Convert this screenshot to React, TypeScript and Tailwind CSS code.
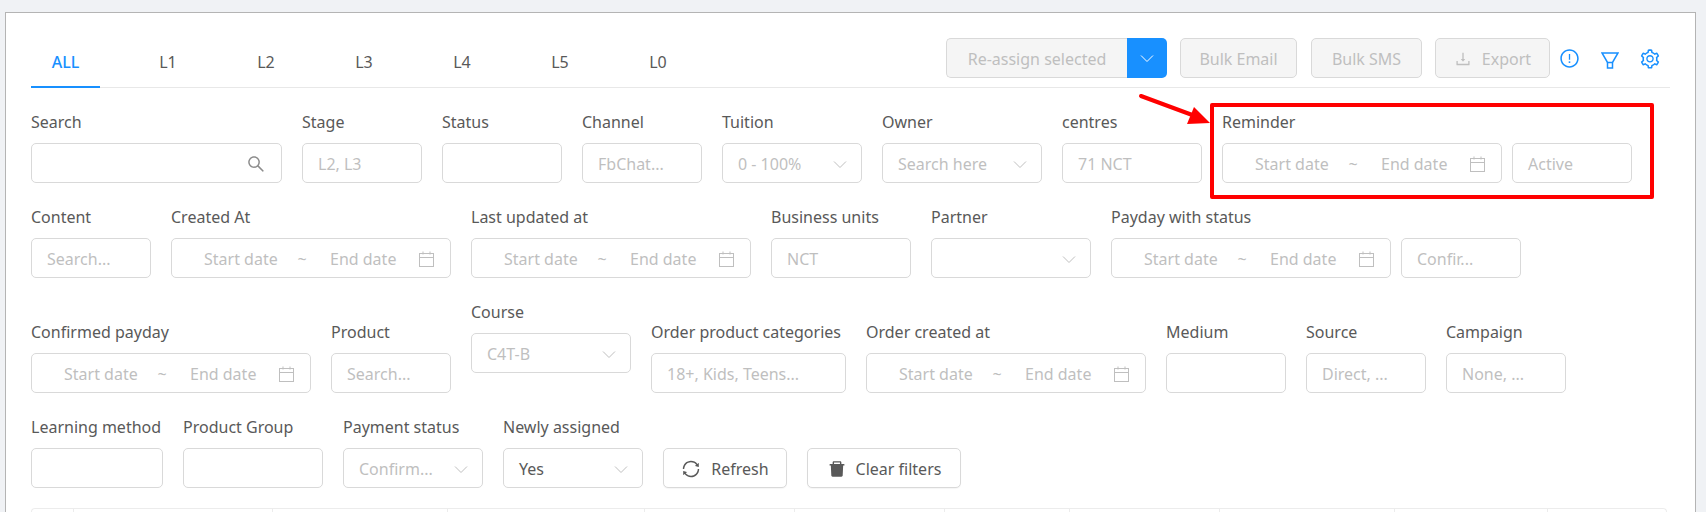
import React from 'react';
import {
  AiFillDelete,
  AiOutlineDownload,
  AiOutlineExclamationCircle,
  AiOutlineSearch,
  AiOutlineSetting,
  AiOutlineSync,
} from 'react-icons/ai';

const tabs = ['L1', 'L2', 'L3', 'L4', 'L5', 'L0'];

const tableCols = [
  'w-[42px]',
  'w-[199px]',
  'w-[175px]',
  'w-[197px]',
  'w-[150px]',
  'w-[150px]',
  'w-[125px]',
  'w-[150px]',
  'w-[175px]',
  'w-[153px]',
  'w-[119px]',
];

const Chevron = ({ className = 'text-[#bfbfbf]' }: { className?: string }) => (
  <svg width="14" height="9" viewBox="0 0 14 9" fill="none" stroke="currentColor" strokeWidth="1" className={className}>
    <path d="M1 1.5 7 7.5 13 1.5" />
  </svg>
);

const CalendarIcon = () => (
  <svg width="15" height="16" viewBox="0 0 15 16" fill="none" stroke="#bfbfbf" strokeWidth="1">
    <rect x="0.5" y="2.5" width="14" height="13" />
    <path d="M0.5 6.5h14M4 0.5v3M11 0.5v3" />
  </svg>
);

const FunnelIcon = () => (
  <svg width="18" height="17" viewBox="0 0 18 17" fill="none" stroke="#1890ff" strokeWidth="1.5">
    <path d="M1 1h16L11.5 10.5h-5L1 1Z" />
    <path d="M6.5 10.5v5.5h5v-5.5" />
  </svg>
);

const Box = ({ className, children }: { className: string; children?: React.ReactNode }) => (
  <div className={`flex h-10 items-center rounded-[5px] border border-[#d9d9d9] bg-white px-[15px] pt-[2px] text-[#bfbfbf] ${className}`}>
    {children}
  </div>
);

const Field = ({ label, className = '', children }: { label: string; className?: string; children: React.ReactNode }) => (
  <div className={`flex-none ${className}`}>
    <div className="h-8 whitespace-nowrap leading-[23px] text-[#595959]">{label}</div>
    {children}
  </div>
);

const TextField = ({ label, width, text }: { label: string; width: string; text?: string }) => (
  <Field label={label}>
    <Box className={`whitespace-nowrap ${width}`}>{text}</Box>
  </Field>
);

const SelectField = ({ label, width, text, dark, className }: { label: string; width: string; text?: string; dark?: boolean; className?: string }) => (
  <Field label={label} className={className}>
    <Box className={`justify-between whitespace-nowrap pr-[14px] ${width}`}>
      <span className={dark ? 'text-[#595959]' : ''}>{text}</span>
      <Chevron />
    </Box>
  </Field>
);

const DateBox = () => (
  <Box className="w-[280px] pl-[32px] pr-[16px]">
    <span className="w-[77px] flex-none whitespace-nowrap">Start date</span>
    <span className="w-[49px] flex-none pr-[7px] text-center">~</span>
    <span className="flex-1 whitespace-nowrap">End date</span>
    <CalendarIcon />
  </Box>
);

const DateField = ({ label }: { label: string }) => (
  <Field label={label}>
    <DateBox />
  </Field>
);

const DateStatusField = ({ label, text }: { label: string; text: string }) => (
  <Field label={label}>
    <div className="flex gap-[10px]">
      <DateBox />
      <Box className="w-[120px]">{text}</Box>
    </div>
  </Field>
);

const DisabledButton = ({ className, children }: { className: string; children: React.ReactNode }) => (
  <div className={`flex h-10 items-center justify-center whitespace-nowrap rounded-[5px] border border-[#d9d9d9] bg-[#f5f5f5] pt-[2px] text-[#bfbfbf] ${className}`}>
    {children}
  </div>
);

const ActionButton = ({ className, children }: { className: string; children: React.ReactNode }) => (
  <div className={`flex h-10 flex-none items-center justify-center whitespace-nowrap rounded-[5px] border border-[#d9d9d9] bg-white pt-[2px] text-[#595959] shadow-[0_1px_1px_rgba(0,0,0,0.04)] ${className}`}>
    {children}
  </div>
);

export default function App() {
  return (
    <div className="relative h-[512px] overflow-hidden bg-[#f0f2f5] pl-[5px] pr-[10px] pt-[12px] font-['Noto_Sans',sans-serif] text-[16px]">
      <div className="h-[600px] border border-[#b4b4b4] border-b-0 bg-white px-[25px] pt-[25px]">
        {/* Tabs and bulk actions */}
        <div className="flex h-[50px] items-start justify-between border-b border-[#e8e8e8]">
          <div className="flex">
            <div className="mr-10 flex h-[50px] w-[69px] items-center justify-center border-b-2 border-[#1890ff] font-medium text-[#1890ff]">
              ALL
            </div>
            {tabs.map((tab) => (
              <div key={tab} className="mr-[42px] flex h-[50px] w-[56px] items-center justify-center pb-[2px] text-[#595959]">
                {tab}
              </div>
            ))}
          </div>
          <div className="flex items-start">
            <div className="flex">
              <DisabledButton className="w-[181px] rounded-r-none border-r-0">Re-assign selected</DisabledButton>
              <div className="flex h-10 w-10 items-center justify-center rounded-r-[5px] bg-[#1890ff]">
                <Chevron className="text-white" />
              </div>
            </div>
            <DisabledButton className="ml-[13px] w-[117px]">Bulk Email</DisabledButton>
            <DisabledButton className="ml-[14px] w-[111px]">Bulk SMS</DisabledButton>
            <DisabledButton className="ml-[13px] w-[115px] gap-[10px]">
              <AiOutlineDownload size={18} />
              Export
            </DisabledButton>
            <div className="mr-[9px] ml-[9px] mt-[10px] flex items-start text-[#1890ff]">
              <AiOutlineExclamationCircle size={21} />
              <div className="ml-[21px] mt-[4px]">
                <FunnelIcon />
              </div>
              <div className="ml-[20px]">
                <AiOutlineSetting size={22} />
              </div>
            </div>
          </div>
        </div>

        {/* Filters */}
        <div className="mt-[23px] flex flex-col gap-[23px]">
          <div className="flex gap-5">
            <Field label="Search">
              <Box className="w-[251px] justify-end">
                <AiOutlineSearch size={20} className="text-[#8c8c8c]" />
              </Box>
            </Field>
            <TextField label="Stage" width="w-[120px]" text="L2, L3" />
            <TextField label="Status" width="w-[120px]" />
            <TextField label="Channel" width="w-[120px]" text="FbChat..." />
            <SelectField label="Tuition" width="w-[140px]" text="0 - 100%" />
            <SelectField label="Owner" width="w-[160px]" text="Search here" />
            <TextField label="centres" width="w-[140px]" text="71 NCT" />
            <DateStatusField label="Reminder" text="Active" />
          </div>

          <div className="flex gap-5">
            <TextField label="Content" width="w-[120px]" text="Search..." />
            <DateField label="Created At" />
            <DateField label="Last updated at" />
            <TextField label="Business units" width="w-[140px]" text="NCT" />
            <SelectField label="Partner" width="w-[160px]" />
            <DateStatusField label="Payday with status" text="Confir..." />
          </div>

          <div className="flex items-end gap-5">
            <DateField label="Confirmed payday" />
            <TextField label="Product" width="w-[120px]" text="Search..." />
            <SelectField label="Course" width="w-[160px]" text="C4T-B" className="mb-5" />
            <TextField label="Order product categories" width="w-[195px]" text="18+, Kids, Teens..." />
            <DateField label="Order created at" />
            <TextField label="Medium" width="w-[120px]" />
            <TextField label="Source" width="w-[120px]" text="Direct, ..." />
            <TextField label="Campaign" width="w-[120px]" text="None, ..." />
          </div>

          <div className="flex items-end gap-5">
            <TextField label="Learning method" width="w-[132px]" />
            <TextField label="Product Group" width="w-[140px]" />
            <SelectField label="Payment status" width="w-[140px]" text="Confirm..." />
            <SelectField label="Newly assigned" width="w-[140px]" text="Yes" dark />
            <ActionButton className="w-[124px] gap-[10px]">
              <AiOutlineSync size={20} />
              Refresh
            </ActionButton>
            <ActionButton className="w-[154px] gap-[9px]">
              <AiFillDelete size={20} />
              Clear filters
            </ActionButton>
          </div>
        </div>

        {/* Top edge of the table below the filters */}
        <div className="mt-5 flex h-10 w-[1636px] rounded-t-[4px] border-x border-t border-[#ececec]">
          {tableCols.map((col, i) => (
            <div key={i} className={`${col} flex-none border-r border-[#ececec] last:border-r-0`} />
          ))}
        </div>
      </div>

      {/* Red annotation drawn on top of the screenshot */}
      <div className="absolute left-[1210px] top-[103px] h-[96px] w-[444px] rounded-[2px] border-4 border-[#ff0000]" />
      <svg className="absolute left-[1135px] top-[90px]" width="80" height="40" viewBox="0 0 80 40" fill="none">
        <path d="M6 6 60 26" stroke="#ff0000" strokeWidth="4" strokeLinecap="round" />
        <path d="M75 33 52 34 59 17Z" fill="#ff0000" />
      </svg>
    </div>
  );
}
